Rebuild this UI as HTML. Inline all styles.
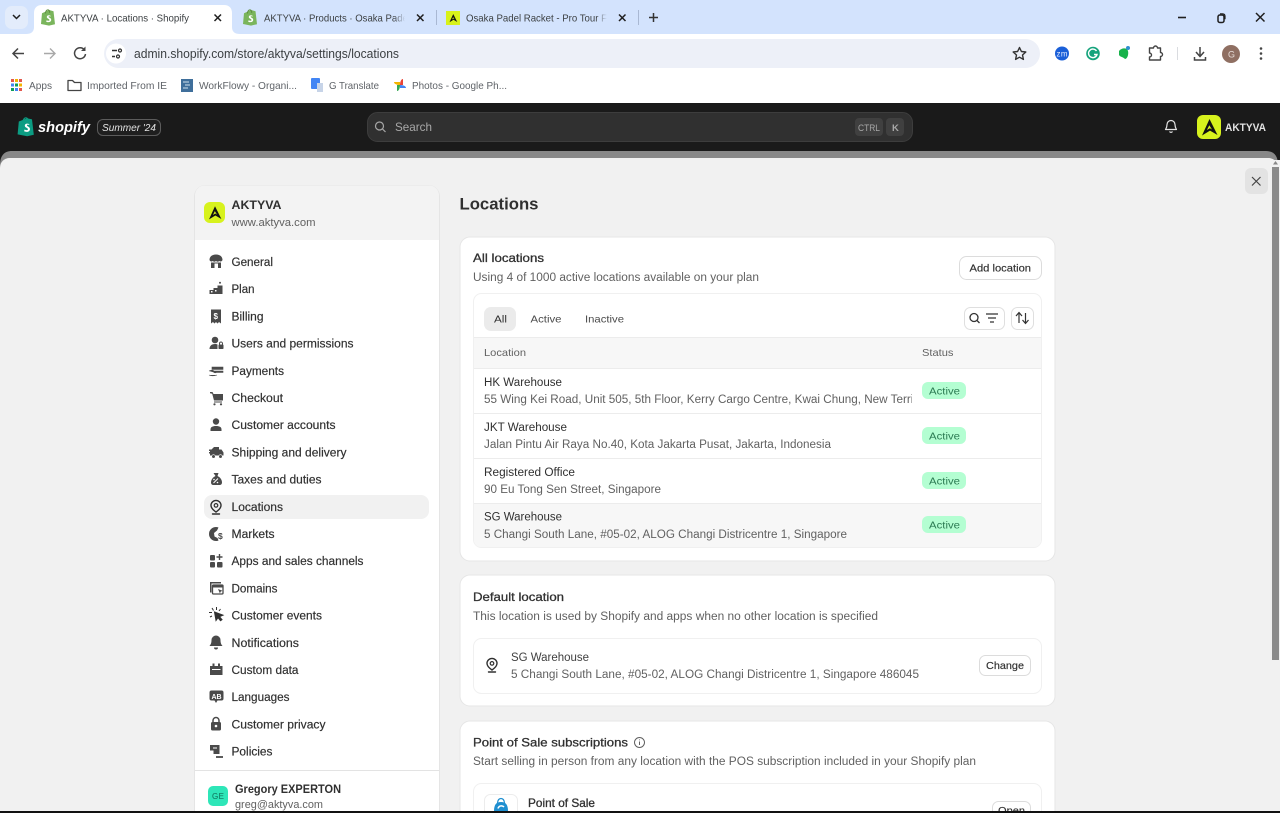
<!DOCTYPE html>
<html lang="en"><head><meta charset="utf-8"><title>AKTYVA · Locations · Shopify</title>
<style>
html,body{margin:0;padding:0;width:1280px;height:813px;overflow:hidden;background:#fff}
svg{display:block}
#page{filter:blur(.3px)}
text{font-family:"Liberation Sans",sans-serif;dominant-baseline:auto}
.tab{font-size:10.5px;fill:#3c4043}
.bm{font-size:10.5px;fill:#5f6368}
.nav{font-size:11.5px;fill:#303030;stroke:#303030;stroke-width:.18}
.sub{font-size:11.5px;fill:#616161}
.h{font-size:12px;fill:#303030;stroke:#303030;stroke-width:.3}
.th{font-size:10.5px;fill:#616161}
.btn{font-size:10.5px;fill:#303030;stroke:#303030;stroke-width:.15}
.badge{font-size:10.5px;fill:#2b7a52}
</style></head><body>
<svg id="page" width="1280" height="813" viewBox="0 0 1280 813" xmlns="http://www.w3.org/2000/svg">
<defs>
<path id="alogo" d="M12.5 4 20.5 20 13 15.6 5 20.5ZM12.3 10.200 9.900 15 12.900 13.200 15 14.500Z" fill-rule="evenodd"/>
<g id="bag"><path d="M2 4.200 9.200 1l4.300 1.200L15 15.200 9 16.600 1 15Z" fill="#7ab55c"/><path d="M5.400 4.400C5.600 2 6.800 .8 8 .9c1.300.1 1.700 1.600 1.700 3" fill="none" stroke="#5e8e3e"/><path d="M10.400 6.600c-1.600-.7-3.600-.2-3.600 1.400 0 1.800 2.700 1.700 2.700 3 0 1-1.600 1-2.900.2l-.4 1.500c1.900.9 5 .7 5-1.900 0-2-2.600-2-2.600-3 0-.7 1-.8 2.200-.3Z" fill="#fff"/></g>
<g id="pin"><path d="M8 1.400a5 5 0 0 0-5 5c0 3 2.800 5.100 5 6.600 2.200-1.500 5-3.600 5-6.600a5 5 0 0 0-5-5Z" fill="none" stroke="#303030" stroke-width="1.400"/><circle cx="8" cy="6.400" r="1.800" fill="none" stroke="#303030" stroke-width="1.200"/><path d="M4.500 15h7" stroke="#303030" stroke-width="1.400" stroke-linecap="round"/></g>
<linearGradient id="fade" x1="0" x2="1" y1="0" y2="0"><stop offset="0" stop-color="#d3e3fd" stop-opacity="0"/><stop offset="1" stop-color="#d3e3fd"/></linearGradient>
</defs>

<!-- browser tab strip -->
<rect width="1280" height="34" fill="#d3e3fd"/>
<rect x="5" y="6" width="23" height="23" rx="7" fill="#e3ecfb"/>
<path d="M13 15l3.500 3.500L20 15" fill="none" stroke="#1f1f1f" stroke-width="1.500"/>
<path d="M26 34c5 0 8-2 8-7V13c0-5 3-8 8-8h182c5 0 8 3 8 8v14c0 5 3 7 8 7Z" fill="#fff"/>
<use href="#bag" x="40" y="9"/>
<text class="tab" x="61" y="21.500" textLength="128" lengthAdjust="spacingAndGlyphs">AKTYVA · Locations · Shopify</text>
<path d="M214.500 14.500l6.500 6.500m0-6.500-6.500 6.500" stroke="#1f1f1f" stroke-width="1.500"/>
<use href="#bag" x="242" y="9"/>
<text class="tab" x="264" y="21.500" textLength="146" lengthAdjust="spacingAndGlyphs">AKTYVA · Products · Osaka Padel</text>
<rect x="394" y="10" width="11" height="16" fill="url(#fade)"/><rect x="405" y="10" width="8" height="16" fill="#d3e3fd"/>
<path d="M417 14.500l6.500 6.500m0-6.500-6.500 6.500" stroke="#1f1f1f" stroke-width="1.500"/>
<rect x="436" y="10" width="1" height="15" fill="#a9b8d3"/>
<rect x="446" y="11" width="14" height="14" fill="#d8f21a"/>
<use href="#alogo" transform="translate(447 12) scale(.5)" fill="#111"/>
<text class="tab" x="466" y="21.500" textLength="141" lengthAdjust="spacingAndGlyphs">Osaka Padel Racket - Pro Tour F</text>
<rect x="596" y="10" width="11" height="16" fill="url(#fade)"/><rect x="607" y="10" width="6" height="16" fill="#d3e3fd"/>
<path d="M619 14.500l6.500 6.500m0-6.500-6.500 6.500" stroke="#1f1f1f" stroke-width="1.500"/>
<rect x="638" y="10" width="1" height="15" fill="#a9b8d3"/>
<path d="M653.500 13v9M649 17.500h9" stroke="#333" stroke-width="1.500"/>
<path d="M1178 17.500h8" stroke="#1f1f1f" stroke-width="1.600"/>
<rect x="1218" y="15" width="6" height="7.500" rx="1.800" fill="none" stroke="#1f1f1f" stroke-width="1.500"/><path d="M1220 13.800h2.500c1.800 0 2.500 1 2.500 2.500v3" fill="none" stroke="#1f1f1f" stroke-width="1.200"/>
<path d="M1256 13l8.500 8.500m0-8.500-8.500 8.500" stroke="#1f1f1f" stroke-width="1.500"/>

<!-- toolbar -->
<rect y="34" width="1280" height="69" fill="#fff"/>
<path d="M24 53.500H13m5-5-5 5 5 5" fill="none" stroke="#444" stroke-width="1.500"/>
<path d="M55 53.500H44m6-5 5 5-5 5" fill="none" stroke="#a8a8a8" stroke-width="1.400"/>
<path d="M84.500 50a5.500 5.500 0 1 0 1 4" fill="none" stroke="#444" stroke-width="1.500"/><path d="M85.500 46.500v4.500H81Z" fill="#444"/>
<rect x="104" y="39" width="936" height="29" rx="14.500" fill="#edf0f8"/>
<circle cx="116" cy="53.500" r="10" fill="#fff"/>
<path d="M112 50.500h5M112 56.500h3" stroke="#333" stroke-width="1.400"/><circle cx="120" cy="50.500" r="1.500" fill="none" stroke="#333" stroke-width="1.200"/><circle cx="118" cy="56.500" r="1.500" fill="none" stroke="#333" stroke-width="1.200"/>
<text x="134" y="58" font-size="12.500" fill="#3c4043" textLength="265" lengthAdjust="spacingAndGlyphs">admin.shopify.com/store/aktyva/settings/locations</text>
<path d="M1019.500 47.500l1.900 4 4.400.5-3.300 3 .9 4.400-3.900-2.200-3.900 2.200.9-4.400-3.300-3 4.400-.5Z" fill="none" stroke="#333" stroke-width="1.400" stroke-linejoin="round"/>
<circle cx="1062" cy="53.500" r="7" fill="#1a5fd8"/><text x="1056.500" y="56.500" font-size="8" fill="#dfe9ff" textLength="11">zm</text>
<circle cx="1093" cy="53.500" r="6.800" fill="#15a37c"/><path d="M1096.500 51a4.300 4.300 0 1 0 .5 3.500h-3" fill="none" stroke="#fff" stroke-width="1.400"/>
<path d="M1119 51c2-3 8-4 9 0 .8 3-.5 8-3 8-1.500-2-5-2-6-4 0-2 0-3 0-4Z" fill="#18b24b"/><circle cx="1128" cy="48" r="2" fill="#2f8fd0"/>
<path d="M1149.500 48h4a2 2 0 0 1 4 0h3v4.500a2 2 0 0 1 0 4v3.500h-11v-3a2 2 0 0 0 0-4Z" fill="none" stroke="#444" stroke-width="1.400" stroke-linejoin="round"/>
<rect x="1177" y="47" width="1" height="13" fill="#dadce0"/>
<path d="M1200 47v9m-4-4 4 4.500 4-4.500M1194.500 57v3h11v-3" fill="none" stroke="#444" stroke-width="1.500"/>
<circle cx="1231" cy="54" r="9" fill="#8f6f62"/><text x="1228" y="57.500" font-size="9" fill="#e6dcd8">G</text>
<circle cx="1261" cy="48.500" r="1.300" fill="#444"/><circle cx="1261" cy="53.500" r="1.300" fill="#444"/><circle cx="1261" cy="58.500" r="1.300" fill="#444"/>

<!-- bookmarks -->
<rect x="11" y="79" width="3" height="3" fill="#e2574c"/><rect x="15" y="79" width="3" height="3" fill="#f4b400"/><rect x="19" y="79" width="3" height="3" fill="#e2574c"/><rect x="11" y="83.500" width="3" height="3" fill="#4285f4"/><rect x="15" y="83.500" width="3" height="3" fill="#0f9d58"/><rect x="19" y="83.500" width="3" height="3" fill="#f4b400"/><rect x="11" y="88" width="3" height="3" fill="#0f9d58"/><rect x="15" y="88" width="3" height="3" fill="#4285f4"/><rect x="19" y="88" width="3" height="3" fill="#e2574c"/>
<text class="bm" x="29" y="89" textLength="23" lengthAdjust="spacingAndGlyphs">Apps</text>
<path d="M68 80.500h4.500l2 2H81v8H68Z" fill="none" stroke="#444" stroke-width="1.300" stroke-linejoin="round"/>
<text class="bm" x="87" y="89" textLength="80" lengthAdjust="spacingAndGlyphs">Imported From IE</text>
<rect x="181" y="79" width="12" height="13" fill="#3f6f9b"/><path d="M183 82h6M185 85h5M183 88h5" stroke="#cfe0ee"/>
<text class="bm" x="199" y="89" textLength="98" lengthAdjust="spacingAndGlyphs">WorkFlowy - Organi...</text>
<rect x="311" y="78" width="9" height="11" rx="1" fill="#4285f4"/><path d="M317 83h6v9h-6Z" fill="#c7d4e8"/>
<text class="bm" x="329" y="89" textLength="50" lengthAdjust="spacingAndGlyphs">G Translate</text>
<path d="M400 85c-3 0-6-1-6-3h6Z" fill="#f4b400"/><path d="M400 85c0-3 1-6 3-6v6Z" fill="#ea4335"/><path d="M400 85c3 0 6 1 6 3h-6Z" fill="#4285f4"/><path d="M400 85c0 3-1 6-3 6v-6Z" fill="#34a853"/>
<text class="bm" x="412" y="89" textLength="95" lengthAdjust="spacingAndGlyphs">Photos - Google Ph...</text>

<!-- shopify top bar -->
<rect y="103" width="1280" height="710" fill="#1a1a1a"/>
<g transform="translate(17 117) scale(1.200)"><path d="M1.500 3.800 8.500 1l4 1L14 14.800 8.500 16 .5 14.500Z" fill="#0c9c82"/><path d="M10 5.800c-1.500-.7-3.500-.2-3.500 1.400 0 1.800 2.600 1.700 2.600 3 0 1-1.500 1-2.800.2l-.4 1.500c1.900.9 4.900.7 4.900-1.900 0-2-2.500-2-2.500-3 0-.7 1-.8 2.100-.3Z" fill="#fff"/><path d="M5 4C5.200 1.800 6.400.6 7.500.7 8.800.8 9.200 2.200 9.200 3.500" fill="none" stroke="#0c9c82"/></g>
<text x="38" y="132" font-size="15" font-weight="700" font-style="italic" fill="#fff" textLength="52" lengthAdjust="spacingAndGlyphs">shopify</text>
<rect x="97.500" y="119.500" width="63" height="16" rx="5.500" fill="#1f1f1f" stroke="#5c5c5c"/>
<text x="102" y="131" font-size="10" font-style="italic" fill="#e3e3e3" textLength="54" lengthAdjust="spacingAndGlyphs">Summer '24</text>
<rect x="367.500" y="112.500" width="545" height="29" rx="10" fill="#303030" stroke="#3d3d3d"/>
<circle cx="379.500" cy="126" r="4" fill="none" stroke="#a8a8a8" stroke-width="1.200"/><path d="M382.500 129l3 3" stroke="#a8a8a8" stroke-width="1.200"/>
<text x="395" y="131" font-size="12" fill="#a8a8a8" textLength="37" lengthAdjust="spacingAndGlyphs">Search</text>
<rect x="855" y="118" width="28" height="18" rx="4" fill="#404040"/><text x="858" y="131" font-size="9.500" fill="#a8a8a8" textLength="22" lengthAdjust="spacingAndGlyphs">CTRL</text>
<rect x="886" y="118" width="18" height="18" rx="4" fill="#404040"/><text x="892" y="131" font-size="9.500" font-weight="700" fill="#a8a8a8">K</text>
<path d="M1171 120.500a4 4 0 0 0-4 4c0 3-1 4-1.500 5h11c-.5-1-1.500-2-1.500-5a4 4 0 0 0-4-4ZM1169.500 131.500a1.700 1.700 0 0 0 3 0" fill="none" stroke="#e3e3e3" stroke-width="1.200" stroke-linejoin="round"/>
<rect x="1197" y="115" width="24" height="24" rx="6" fill="#d7f21d"/>
<use href="#alogo" transform="translate(1197 115)" fill="#111"/>
<text x="1225" y="131" font-size="11" font-weight="700" fill="#e3e3e3" textLength="41" lengthAdjust="spacingAndGlyphs">AKTYVA</text>

<!-- modal -->
<path d="M0 165c0-9 4-14 12-14h1254c8 0 12 5 12 14v10H0Z" fill="#888"/>
<path d="M0 168c0-6 4-10 10-10h1258c6 0 10 4 10 10v643H0Z" fill="#f1f1f1"/>
<rect x="1271" y="160" width="9" height="651" fill="#f1f1f1"/>
<rect x="1272" y="167" width="7" height="493" fill="#8b8b8b"/>
<path d="M1275.500 161l-2.500 3.500h5Z" fill="#888"/>
<rect x="1245" y="168" width="23" height="26" rx="6" fill="#e3e3e3"/>
<path d="M1252 177l8.500 8.500m0-8.500-8.500 8.500" stroke="#444" stroke-width="1.200"/>

<!-- sidebar -->
<rect x="194.500" y="185.500" width="245" height="640" rx="11" fill="#fff" stroke="#e5e5e5"/>
<path d="M195 240v-44c0-6 4-10.500 10-10.500h224c6 0 10 4.500 10 10.500v44Z" fill="#f3f3f3"/>
<rect x="204" y="202" width="21" height="21" rx="6" fill="#d7f21d"/>
<use href="#alogo" transform="translate(205 203) scale(.8)" fill="#111"/>
<text x="231.500" y="209" font-size="12" font-weight="700" fill="#303030" textLength="50" lengthAdjust="spacingAndGlyphs">AKTYVA</text>
<text x="231.500" y="226" font-size="11" fill="#616161" textLength="84" lengthAdjust="spacingAndGlyphs">www.aktyva.com</text>
<rect x="204" y="495" width="225" height="24" rx="8" fill="#f1f1f1"/>

<text class="nav" x="231.500" y="266" textLength="41.500" lengthAdjust="spacingAndGlyphs">General</text>
<text class="nav" x="231.500" y="293" textLength="23" lengthAdjust="spacingAndGlyphs">Plan</text>
<text class="nav" x="231.500" y="320.500" textLength="32" lengthAdjust="spacingAndGlyphs">Billing</text>
<text class="nav" x="231.500" y="347.500" textLength="122" lengthAdjust="spacingAndGlyphs">Users and permissions</text>
<text class="nav" x="231.500" y="375" textLength="52.500" lengthAdjust="spacingAndGlyphs">Payments</text>
<text class="nav" x="231.500" y="402" textLength="51.500" lengthAdjust="spacingAndGlyphs">Checkout</text>
<text class="nav" x="231.500" y="429" textLength="104" lengthAdjust="spacingAndGlyphs">Customer accounts</text>
<text class="nav" x="231.500" y="456.500" textLength="115" lengthAdjust="spacingAndGlyphs">Shipping and delivery</text>
<text class="nav" x="231.500" y="483.500" textLength="90" lengthAdjust="spacingAndGlyphs">Taxes and duties</text>
<text class="nav" x="231.500" y="511" textLength="51.500" lengthAdjust="spacingAndGlyphs">Locations</text>
<text class="nav" x="231.500" y="538" textLength="43" lengthAdjust="spacingAndGlyphs">Markets</text>
<text class="nav" x="231.500" y="565" textLength="132" lengthAdjust="spacingAndGlyphs">Apps and sales channels</text>
<text class="nav" x="231.500" y="592.500" textLength="46" lengthAdjust="spacingAndGlyphs">Domains</text>
<text class="nav" x="231.500" y="619.500" textLength="90.500" lengthAdjust="spacingAndGlyphs">Customer events</text>
<text class="nav" x="231.500" y="647" textLength="67.500" lengthAdjust="spacingAndGlyphs">Notifications</text>
<text class="nav" x="231.500" y="674" textLength="67" lengthAdjust="spacingAndGlyphs">Custom data</text>
<text class="nav" x="231.500" y="701" textLength="58" lengthAdjust="spacingAndGlyphs">Languages</text>
<text class="nav" x="231.500" y="728.500" textLength="94" lengthAdjust="spacingAndGlyphs">Customer privacy</text>
<text class="nav" x="231.500" y="755.500" textLength="41" lengthAdjust="spacingAndGlyphs">Policies</text>

<!-- sidebar icons -->
<path d="M209.500 260c0-3 2-5.500 6.500-5.500s6.500 2.500 6.500 5.500a2 2 0 0 1-3.200 1 2.200 2.200 0 0 1-3.300 0 2.200 2.200 0 0 1-3.300 0 2 2 0 0 1-3.200-1ZM211 262.500h10v5.500h-10Z" fill="#4a4a4a"/><rect x="214.500" y="263.500" width="3.500" height="4.500" fill="#fff"/>
<path d="M209.500 294v-4h4v-2h4v-2.500h5V294Z" fill="#4a4a4a"/><circle cx="220" cy="282.800" r="1" fill="#4a4a4a"/><rect x="211" y="291" width="1.500" height="1.500" fill="#fff"/><rect x="215" y="290" width="1.500" height="1.500" fill="#fff"/>
<path d="M211 309.500h10v14l-2-1.500-1.500 1.500-1.500-1.500-1.500 1.500-1.500-1.500-2 1.500Z" fill="#4a4a4a"/><text x="213.500" y="319" font-size="8" font-weight="700" fill="#fff">$</text>
<circle cx="215" cy="340" r="3.300" fill="#4a4a4a"/><path d="M209.500 349c0-3 2-5 5.500-5 1 0 2 .2 2.500.5V349Z" fill="#4a4a4a"/><rect x="218.500" y="344.500" width="5" height="4.500" rx=".8" fill="#4a4a4a"/><path d="M219.500 344.500v-1a1.500 1.500 0 0 1 3 0v1" fill="none" stroke="#4a4a4a"/>
<path d="M212 367h11v2.500h-11ZM214 371h9v1.500h-9ZM209 371c2-1 4-1 5 0l3 1c-1 1-2 1-3 .5M209 375c2 1 4 1.500 8 0" fill="#4a4a4a" stroke="#4a4a4a" stroke-width=".6"/>
<path d="M210 392h2.500l1 2h9.500v6.500h-9l-1.800-6.700-2.200-.6Z" fill="#4a4a4a"/><rect x="214" y="401.500" width="8" height="1" fill="#4a4a4a"/><circle cx="214.500" cy="404.300" r="1.100" fill="#4a4a4a"/><circle cx="221" cy="404.300" r="1.100" fill="#4a4a4a"/>
<circle cx="216" cy="421.500" r="3.200" fill="#4a4a4a"/><path d="M210.500 431v-1.500c0-2.500 2-3.500 5.500-3.500s5.500 1 5.500 3.500v1.500Z" fill="#4a4a4a"/>
<path d="M214 447h5v2.500h2.500l2 3v3h-13.500v-2h-1v-1.500h1v-1h-1V449.500h2.500Z" fill="#4a4a4a"/><circle cx="213.500" cy="456.500" r="1.800" fill="#4a4a4a" stroke="#fff" stroke-width=".6"/><circle cx="220.500" cy="456.500" r="1.800" fill="#4a4a4a" stroke="#fff" stroke-width=".6"/>
<path d="M213.500 473h5l-1 3c3 1.500 4.500 4 4.500 6.500 0 1.500-1 2.500-2.500 2.500h-6c-1.500 0-2.500-1-2.500-2.500 0-2.500 1.500-5 4.500-6.500Z" fill="#4a4a4a"/><path d="M213.500 483l4.500-4.500" stroke="#fff"/><circle cx="214" cy="479.500" r=".8" fill="#fff"/><circle cx="217.500" cy="482.500" r=".8" fill="#fff"/>
<use href="#pin" x="208" y="499"/>
<path d="M216 527a7 7 0 1 0 0 14c1 0 2-.2 2.500-.5l-1-2.500-3-1.500-.5-3.500 3-2.500 1.500-3A7 7 0 0 0 216 527Z" fill="#4a4a4a"/><text x="218" y="539" font-size="8.500" font-weight="700" fill="#4a4a4a">$</text>
<rect x="210" y="555" width="5" height="5.500" rx="1" fill="#4a4a4a"/><rect x="217" y="562" width="5.500" height="5.500" rx="1" fill="#4a4a4a"/><rect x="210" y="562" width="5" height="5.500" rx="1" fill="#4a4a4a"/><path d="M219.500 554v6M216.500 557h6" stroke="#4a4a4a" stroke-width="1.400"/>
<path d="M210 582h11v1.500h-9.500v9H210Z" fill="#4a4a4a"/><rect x="212.500" y="585" width="10.500" height="9" rx="1" fill="none" stroke="#4a4a4a" stroke-width="1.300"/><rect x="213" y="585" width="10" height="2.500" fill="#4a4a4a"/><path d="M218 589l4.500 1.800-1.800.8-.8 1.800Z" fill="#4a4a4a"/>
<path d="M214.500 612l8.500 3.200-3.500 1.500 2.500 3-1.500 1-2.500-3-2 2.800ZM212 608l1.500 2.500M216.500 607v3M220.500 609l-1.500 2M209 612.500h3M210 617l2-1" fill="#303030" stroke="#303030" stroke-width="1"/>
<path d="M216 635.500a4.500 4.500 0 0 0-4.500 4.500c0 3-.8 4.500-2 6h13c-1.200-1.500-2-3-2-6a4.500 4.500 0 0 0-4.500-4.500Z" fill="#4a4a4a"/><path d="M214 647.500a2 2 0 0 0 4 0Z" fill="#4a4a4a"/>
<path d="M210 666h12.500v9H210Z" fill="#4a4a4a"/><rect x="212.500" y="663.500" width="2" height="3.500" fill="#4a4a4a"/><rect x="218" y="663.500" width="2" height="3.500" fill="#4a4a4a"/><path d="M212 669.500h8.500" stroke="#fff"/>
<path d="M211.500 690.500h10a2 2 0 0 1 2 2v6a2 2 0 0 1-2 2h-4l-1.500 2.500-1.500-2.500h-3a2 2 0 0 1-2-2v-6a2 2 0 0 1 2-2Z" fill="#4a4a4a"/><text x="211.500" y="699" font-size="7" font-weight="700" fill="#fff" textLength="10">AB</text>
<rect x="211" y="722" width="10" height="8.500" rx="1.500" fill="#4a4a4a"/><path d="M213 722.500v-2a3 3 0 0 1 6 0v2" fill="none" stroke="#4a4a4a" stroke-width="1.500"/><circle cx="216" cy="726" r="1.300" fill="#fff"/>
<path d="M210 745h9.500v9h-6v-3.500H210Z" fill="#4a4a4a"/><path d="M213 748h4" stroke="#fff"/><path d="M216 757h7" stroke="#4a4a4a" stroke-width="1.800"/>

<rect x="195" y="770" width="244" height="1" fill="#e3e3e3"/>
<rect x="208" y="786" width="20" height="20" rx="5" fill="#2ee6b8"/>
<text x="212" y="799" font-size="8" fill="#0e6f58" textLength="12">GE</text>
<text x="235" y="793" font-size="12" font-weight="700" fill="#303030" textLength="106" lengthAdjust="spacingAndGlyphs">Gregory EXPERTON</text>
<text x="235" y="808" font-size="11" fill="#616161" textLength="88" lengthAdjust="spacingAndGlyphs">greg@aktyva.com</text>

<!-- main -->
<text x="459.500" y="209.500" font-size="17" font-weight="700" fill="#303030" textLength="79" lengthAdjust="spacingAndGlyphs">Locations</text>

<!-- card 1 -->
<rect x="460" y="237" width="595" height="324" rx="10" fill="#fff" stroke="#e6e6e6"/>
<text class="h" x="473" y="262" textLength="71" lengthAdjust="spacingAndGlyphs">All locations</text>
<text class="sub" x="473" y="281" textLength="286" lengthAdjust="spacingAndGlyphs">Using 4 of 1000 active locations available on your plan</text>
<rect x="959.500" y="256.500" width="82" height="23" rx="7" fill="#fff" stroke="#dcdcdc"/>
<text class="btn" x="969.500" y="271.500" textLength="61.500" lengthAdjust="spacingAndGlyphs">Add location</text>

<rect x="473.500" y="293.500" width="568" height="254" rx="8" fill="#fff" stroke="#f0f0f0"/>
<rect x="484" y="307" width="32" height="24" rx="7" fill="#ebebeb"/>
<text x="494" y="322.500" font-size="10.500" fill="#303030" textLength="13" lengthAdjust="spacingAndGlyphs">All</text>
<text x="530.500" y="322.500" font-size="10.500" fill="#4a4a4a" textLength="31" lengthAdjust="spacingAndGlyphs">Active</text>
<text x="585" y="322.500" font-size="10.500" fill="#4a4a4a" textLength="39" lengthAdjust="spacingAndGlyphs">Inactive</text>
<rect x="964.500" y="307.500" width="40" height="22" rx="6" fill="#fff" stroke="#dfdfdf"/>
<circle cx="974" cy="317.500" r="4" fill="none" stroke="#333" stroke-width="1.300"/><path d="M977 320.500l2.500 2.500" stroke="#333" stroke-width="1.300"/>
<path d="M986 314h12M988 318h8M990 322h4" stroke="#333" stroke-width="1.200"/>
<rect x="1011.500" y="307.500" width="22" height="22" rx="6" fill="#fff" stroke="#dfdfdf"/>
<path d="M1019 323v-10m-3 3 3-3.500 3 3.500M1025.500 313v10m-3-3 3 3.500 3-3.500" fill="none" stroke="#333" stroke-width="1.200"/>

<rect x="474" y="337" width="567" height="31" fill="#f7f7f7"/>
<rect x="474" y="337" width="567" height="1" fill="#ececec"/>
<rect x="474" y="368" width="567" height="1" fill="#ececec"/>
<text class="th" x="484" y="356" textLength="42" lengthAdjust="spacingAndGlyphs">Location</text>
<text class="th" x="922" y="356" textLength="31.500" lengthAdjust="spacingAndGlyphs">Status</text>
<rect x="474" y="413" width="567" height="1" fill="#ececec"/>
<rect x="474" y="458" width="567" height="1" fill="#ececec"/>
<path d="M474 503h567v37c0 4-3 7-7 7H481c-4 0-7-3-7-7Z" fill="#f7f7f7"/>
<rect x="474" y="503" width="567" height="1" fill="#ececec"/>

<text x="484" y="386" font-size="11.500" fill="#303030" textLength="78" lengthAdjust="spacingAndGlyphs">HK Warehouse</text>
<svg x="484" y="390" width="428" height="16"><text class="sub" x="0" y="13" textLength="458" lengthAdjust="spacingAndGlyphs">55 Wing Kei Road, Unit 505, 5th Floor, Kerry Cargo Centre, Kwai Chung, New Territories</text></svg>
<text x="484" y="431" font-size="11.500" fill="#303030" textLength="83" lengthAdjust="spacingAndGlyphs">JKT Warehouse</text>
<text class="sub" x="484" y="448" textLength="347" lengthAdjust="spacingAndGlyphs">Jalan Pintu Air Raya No.40, Kota Jakarta Pusat, Jakarta, Indonesia</text>
<text x="484" y="476" font-size="11.500" fill="#303030" textLength="91" lengthAdjust="spacingAndGlyphs">Registered Office</text>
<text class="sub" x="484" y="493" textLength="177" lengthAdjust="spacingAndGlyphs">90 Eu Tong Sen Street, Singapore</text>
<text x="484" y="520.500" font-size="11.500" fill="#303030" textLength="78" lengthAdjust="spacingAndGlyphs">SG Warehouse</text>
<text class="sub" x="484" y="538" textLength="363" lengthAdjust="spacingAndGlyphs">5 Changi South Lane, #05-02, ALOG Changi Districentre 1, Singapore</text>

<rect x="922" y="382" width="44" height="17" rx="6" fill="#b4fed2"/><text class="badge" x="929" y="394.500" textLength="31" lengthAdjust="spacingAndGlyphs">Active</text>
<rect x="922" y="427" width="44" height="17" rx="6" fill="#b4fed2"/><text class="badge" x="929" y="439.500" textLength="31" lengthAdjust="spacingAndGlyphs">Active</text>
<rect x="922" y="472" width="44" height="17" rx="6" fill="#b4fed2"/><text class="badge" x="929" y="484.500" textLength="31" lengthAdjust="spacingAndGlyphs">Active</text>
<rect x="922" y="516" width="44" height="17" rx="6" fill="#b4fed2"/><text class="badge" x="929" y="528.500" textLength="31" lengthAdjust="spacingAndGlyphs">Active</text>

<!-- card 2 -->
<rect x="460" y="575" width="595" height="131" rx="10" fill="#fff" stroke="#e6e6e6"/>
<text class="h" x="473" y="601" textLength="91" lengthAdjust="spacingAndGlyphs">Default location</text>
<text class="sub" x="473" y="620" textLength="405" lengthAdjust="spacingAndGlyphs">This location is used by Shopify and apps when no other location is specified</text>
<rect x="473.500" y="638.500" width="568" height="55" rx="8" fill="#fff" stroke="#f0f0f0"/>
<use href="#pin" x="484" y="657"/>
<text x="511" y="661" font-size="11.500" fill="#404040" textLength="78" lengthAdjust="spacingAndGlyphs">SG Warehouse</text>
<text class="sub" x="511" y="678" textLength="408" lengthAdjust="spacingAndGlyphs">5 Changi South Lane, #05-02, ALOG Changi Districentre 1, Singapore 486045</text>
<rect x="979.500" y="655.500" width="51" height="20" rx="6" fill="#fff" stroke="#dcdcdc"/>
<text class="btn" x="986" y="669" textLength="38" lengthAdjust="spacingAndGlyphs">Change</text>

<!-- card 3 -->
<rect x="460" y="721" width="595" height="110" rx="10" fill="#fff" stroke="#e6e6e6"/>
<text class="h" x="473" y="746.500" textLength="155" lengthAdjust="spacingAndGlyphs">Point of Sale subscriptions</text>
<circle cx="639.500" cy="742.500" r="5" fill="none" stroke="#616161"/><path d="M639.500 741.500v3.500M639.500 739.500v.8" stroke="#616161"/>
<text class="sub" x="473" y="765" textLength="503" lengthAdjust="spacingAndGlyphs">Start selling in person from any location with the POS subscription included in your Shopify plan</text>
<rect x="473.500" y="783.500" width="568" height="50" rx="8" fill="#fff" stroke="#f0f0f0"/>
<rect x="484.500" y="794.500" width="33" height="30" rx="6" fill="#fff" stroke="#ececec"/>
<path d="M494 811c0-6 2-9 7-9s7 3 7 9v4h-14Z" fill="#1f8fd0"/><path d="M497.500 803c.3-3 1.500-4.500 3.500-4.500s3.200 1.500 3.500 4.500" fill="none" stroke="#1f8fd0" stroke-width="1.300"/><path d="M504 807a3.500 3.500 0 0 0-6 1.500" fill="none" stroke="#fff" stroke-width="1.500"/>
<text class="h" x="528" y="807" textLength="67" lengthAdjust="spacingAndGlyphs">Point of Sale</text>
<rect x="992.500" y="801.500" width="38" height="22" rx="6" fill="#fff" stroke="#dcdcdc"/>
<text class="btn" x="998" y="814" textLength="27" lengthAdjust="spacingAndGlyphs">Open</text>

<!-- bottom edge -->
<rect y="811" width="1280" height="2" fill="#111"/>
</svg>
</body></html>
